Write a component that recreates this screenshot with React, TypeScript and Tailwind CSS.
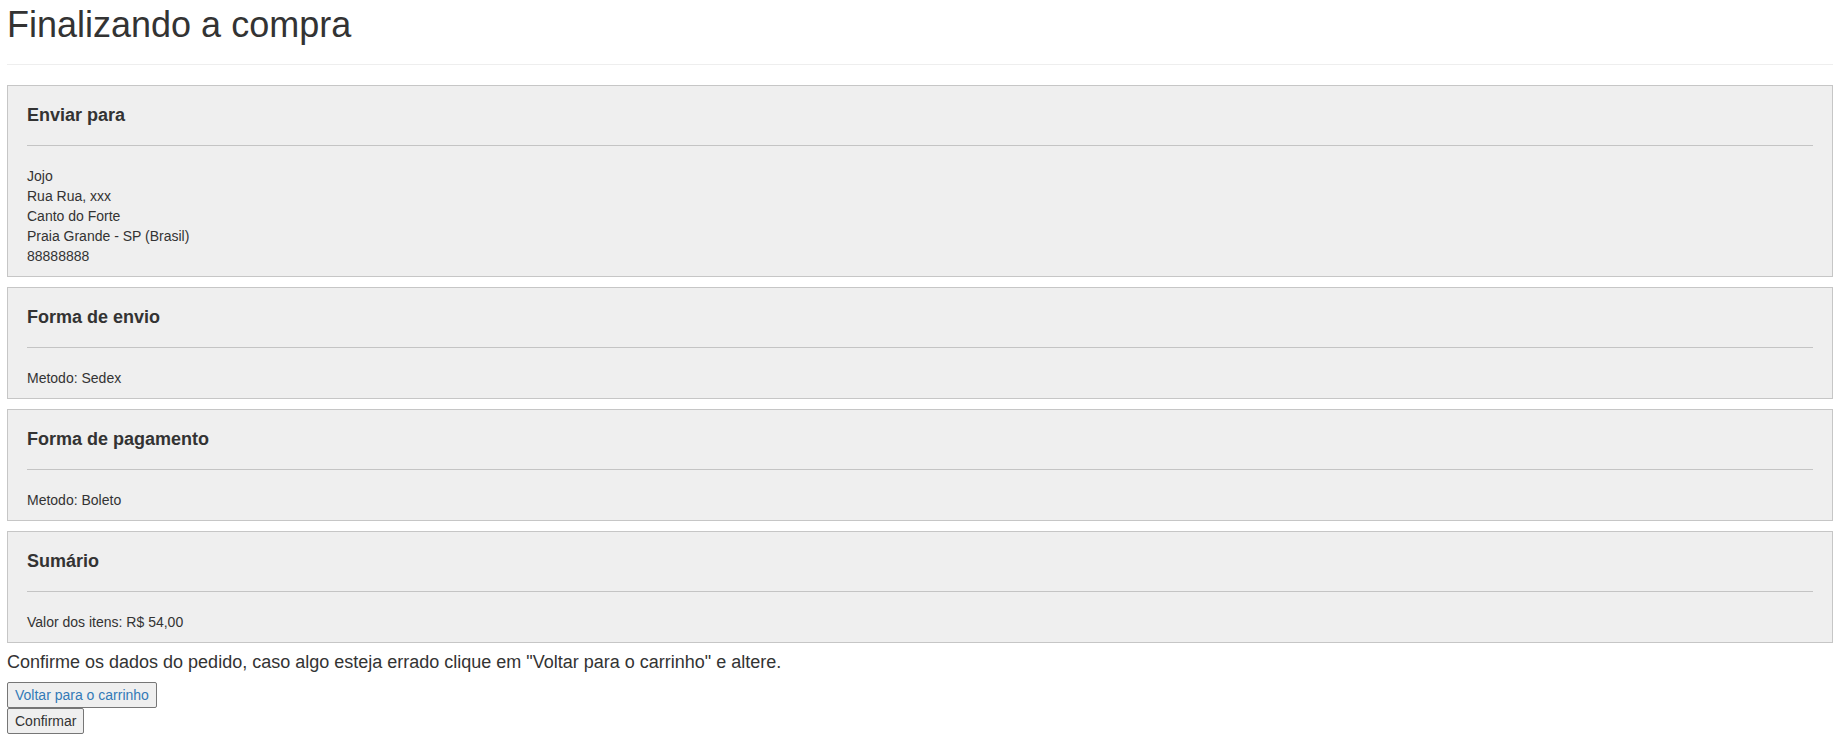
import React from "react";

function Well({ title, children }: { title: string; children: React.ReactNode }) {
  return (
    <div className="border border-[#c6c6c6] bg-[#efefef] pt-[19px] px-[19px] pb-[10px]">
      <h4 className="text-[18px] leading-[20px] font-bold text-[#333]">{title}</h4>
      <hr className="mt-[20px] mb-[20px] border-0 border-t border-[#c4c4c4]" />
      <div className="text-[14px] leading-[20px] text-[#333]">{children}</div>
    </div>
  );
}

export default function App() {
  return (
    <div
      className="bg-white min-h-screen pl-[7px] pr-[6px] text-[#333]"
      style={{ fontFamily: '"Liberation Sans", Arial, Helvetica, sans-serif' }}
    >
      <div className="pt-[5px] pb-[9px] border-b border-[#eeeeee] mb-[20px]">
        <h1 className="text-[36px] leading-[39.6px] font-normal text-[#333] mb-[10px]">
          Finalizando a compra
        </h1>
      </div>
      <div className="flex flex-col gap-[10px]">
        <Well title="Enviar para">
          <div>Jojo</div>
          <div>Rua Rua, xxx</div>
          <div>Canto do Forte</div>
          <div>Praia Grande - SP (Brasil)</div>
          <div>88888888</div>
        </Well>
        <Well title="Forma de envio">
          <div>Metodo: Sedex</div>
        </Well>
        <Well title="Forma de pagamento">
          <div>Metodo: Boleto</div>
        </Well>
        <Well title="Sumário">
          <div>Valor dos itens: R$ 54,00</div>
        </Well>
      </div>
      <p className="mt-[9px] mb-[10px] text-[18px] leading-[20px] text-[#333]">
        Confirme os dados do pedido, caso algo esteja errado clique em "Voltar para o carrinho" e altere.
      </p>
      <div className="flex flex-col items-start">
        <button className="border border-[#767676] rounded-[2px] bg-[#efefef] px-[7px] py-[2px] text-[14px] leading-[20px] text-[#337ab7]">
          Voltar para o carrinho
        </button>
        <button className="border border-[#767676] rounded-[2px] bg-[#efefef] px-[7px] py-[2px] text-[14px] leading-[20px] text-[#333]">
          Confirmar
        </button>
      </div>
    </div>
  );
}
